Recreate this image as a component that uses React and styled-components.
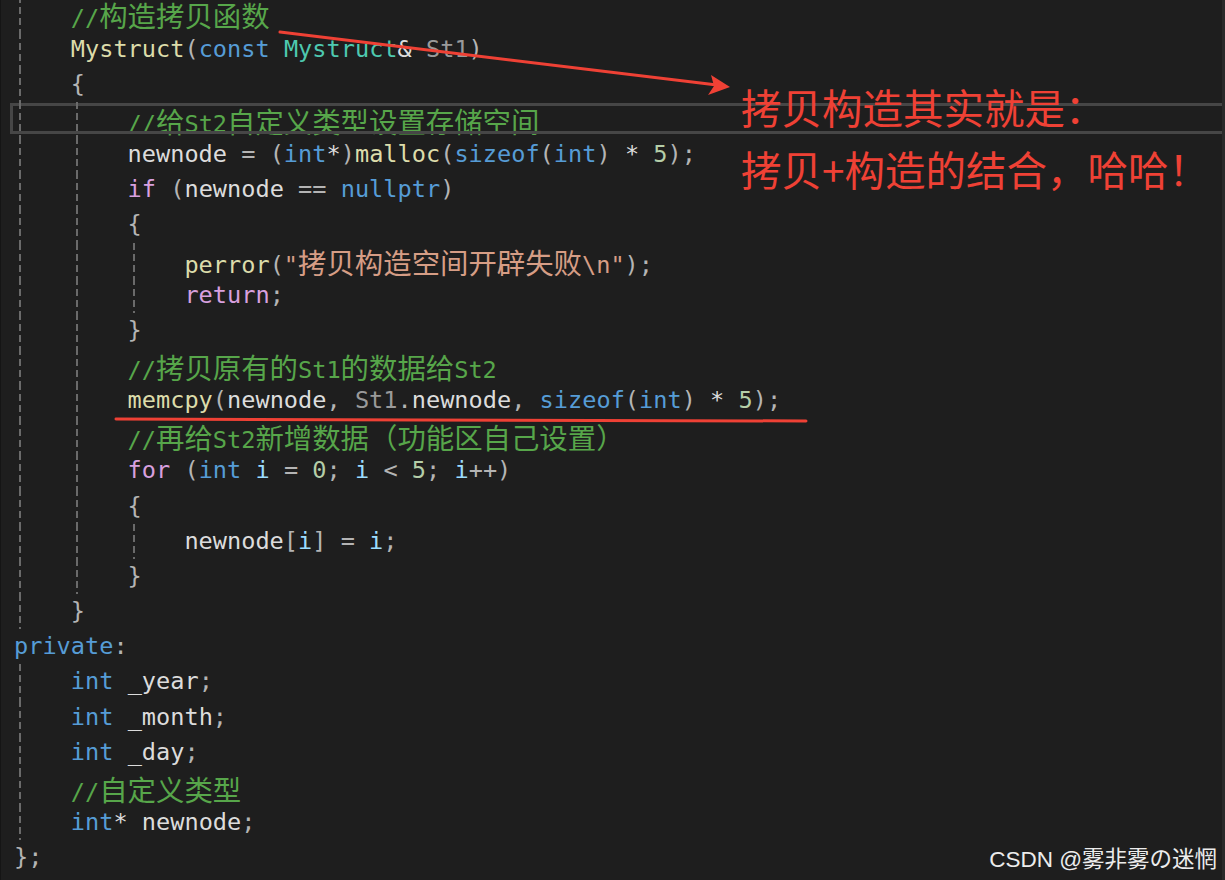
import React from "react";
import styled, { createGlobalStyle } from "styled-components";

const CH = 14.2; // one column of the code font
const LINE = 35.17;

const colors = {
  c: "#57a64a",
  t: "#dcdcdc",
  kw: "#569cd6",
  ctl: "#d8a0df",
  fn: "#dcdcaa",
  ty: "#4ec9b0",
  prm: "#9a9a9a",
  str: "#d69d85",
  num: "#b5cea8",
  p: "#b4b4b4",
  v: "#9cdcfe",
};

const lines = [
  [1, [0], [["c", "//构造拷贝函数"]]],
  [1, [0], [["fn", "Mystruct"], ["p", "("], ["kw", "const"], ["t", " "], ["ty", "Mystruct"], ["t", "& "], ["prm", "St1"], ["p", ")"]]],
  [1, [0], [["p", "{"]]],
  [2, [0, 1], [["c", "//给St2自定义类型设置存储空间"]], true],
  [2, [0, 1], [["t", "newnode "], ["p", "= ("], ["kw", "int"], ["t", "*"], ["p", ")"], ["fn", "malloc"], ["p", "("], ["kw", "sizeof"], ["p", "("], ["kw", "int"], ["p", ") "], ["t", "* "], ["num", "5"], ["p", ");"]]],
  [2, [0, 1], [["ctl", "if"], ["p", " ("], ["t", "newnode "], ["p", "== "], ["kw", "nullptr"], ["p", ")"]]],
  [2, [0, 1], [["p", "{"]]],
  [3, [0, 1, 2], [["fn", "perror"], ["p", "("], ["str", "\"拷贝构造空间开辟失败\\n\""], ["p", ");"]]],
  [3, [0, 1, 2], [["ctl", "return"], ["p", ";"]]],
  [2, [0, 1], [["p", "}"]]],
  [2, [0, 1], [["c", "//拷贝原有的St1的数据给St2"]]],
  [2, [0, 1], [["fn", "memcpy"], ["p", "("], ["t", "newnode"], ["p", ", "], ["prm", "St1"], ["p", "."], ["t", "newnode"], ["p", ", "], ["kw", "sizeof"], ["p", "("], ["kw", "int"], ["p", ") "], ["t", "* "], ["num", "5"], ["p", ");"]]],
  [2, [0, 1], [["c", "//再给St2新增数据（功能区自己设置）"]]],
  [2, [0, 1], [["ctl", "for"], ["p", " ("], ["kw", "int"], ["t", " "], ["v", "i"], ["p", " = "], ["num", "0"], ["p", "; "], ["v", "i"], ["p", " < "], ["num", "5"], ["p", "; "], ["v", "i"], ["p", "++)"]]],
  [2, [0, 1], [["p", "{"]]],
  [3, [0, 1, 2], [["t", "newnode"], ["p", "["], ["v", "i"], ["p", "] = "], ["v", "i"], ["p", ";"]]],
  [2, [0, 1], [["p", "}"]]],
  [1, [0], [["p", "}"]]],
  [0, [], [["kw", "private"], ["p", ":"]]],
  [1, [0], [["kw", "int"], ["t", " _year"], ["p", ";"]]],
  [1, [0], [["kw", "int"], ["t", " _month"], ["p", ";"]]],
  [1, [0], [["kw", "int"], ["t", " _day"], ["p", ";"]]],
  [1, [0], [["c", "//自定义类型"]]],
  [1, [0], [["kw", "int"], ["t", "* newnode"], ["p", ";"]]],
  [0, [], [["p", "};"]]],
];

const GlobalStyle = createGlobalStyle`
  html, body {
    margin: 0;
    background: #1e1e1e;
  }
`;

const Canvas = styled.div`
  position: relative;
  display: flex;
  flex-direction: column;
  width: 1225px;
  height: 880px;
  overflow: hidden;
  background: #1e1e1e;
  border-left: 1px solid #151515;
  border-right: 3px solid #2a2a2a;
  box-sizing: border-box;
`;

const Code = styled.div`
  display: flex;
  flex-direction: column;
  flex-shrink: 0;
  margin-top: -3.6px;
  font-family: "DejaVu Sans Mono", "Liberation Mono", monospace;
  font-size: 23.6px;
`;

const Line = styled.div`
  position: relative;
  flex-shrink: 0;
  height: ${LINE}px;
  line-height: ${LINE}px;
  white-space: pre;
  padding-left: ${(p) => 13 + p.$indent * CH * 4}px;

  ${(p) =>
    p.$current &&
    `
    &::after {
      content: "";
      position: absolute;
      left: 9px;
      right: -20px;
      top: 1px;
      bottom: 3px;
      border: 3px solid #464646;
    }
  `}
`;

const Guide = styled.span`
  position: absolute;
  top: 0;
  bottom: 0;
  left: ${(p) => 18 + p.$col * CH * 4}px;
  width: 2px;
  background: repeating-linear-gradient(
    to bottom,
    #6a6a6a 0 7px,
    transparent 7px 11px
  );
  z-index: 1;
`;

const Tok = styled.span`
  color: ${(p) => colors[p.$kind]};
`;

const Han = styled.span`
  position: relative;
  top: 1px;
  font-family: "Noto Sans CJK SC", sans-serif;
  font-size: ${CH * 2}px;
`;

// hand-written note laid over the screenshot
const Note = styled.div`
  position: absolute;
  left: 740px;
  top: 76px;
  font-family: "Noto Sans CJK SC", sans-serif;
  font-size: 40.5px;
  line-height: 62px;
  color: #ef4135;
  white-space: nowrap;
`;

const Marks = styled.svg`
  position: absolute;
  left: 0;
  top: 0;
  pointer-events: none;
`;

const Watermark = styled.div`
  position: absolute;
  right: 5px;
  bottom: 7px;
  font-family: "Liberation Sans", "Noto Sans CJK JP", sans-serif;
  font-size: 22.5px;
  color: #ececec;
  white-space: nowrap;
`;

const splitHan = (text) =>
  text.split(/([\u3000-\u9fff\uff00-\uffef]+)/).map((part, i) =>
    i % 2 ? <Han key={i}>{part}</Han> : part
  );

export default function App() {
  return (
    <Canvas>
      <GlobalStyle />
      <Code>
        {lines.map(([indent, guides, tokens, current], i) => (
          <Line key={i} $indent={indent} $current={current}>
            {guides.map((g) => (
              <Guide key={g} $col={g} />
            ))}
            {tokens.map(([kind, text], j) => (
              <Tok key={j} $kind={kind}>
                {splitHan(text)}
              </Tok>
            ))}
          </Line>
        ))}
      </Code>

      <Note>
        <div>拷贝构造其实就是：</div>
        <div>拷贝+构造的结合，哈哈！</div>
      </Note>

      <Marks width="1225" height="880" viewBox="0 0 1225 880">
        <line x1="279" y1="32" x2="716" y2="85" stroke="#ef4135" strokeWidth="3" strokeLinecap="round" />
        <polygon points="729,87 710,75 713,86 707,95" fill="#ef4135" />
        <line x1="115" y1="419" x2="805" y2="421" stroke="#ef4135" strokeWidth="3" strokeLinecap="round" />
      </Marks>

      <Watermark>CSDN @雾非雾の迷惘</Watermark>
    </Canvas>
  );
}
